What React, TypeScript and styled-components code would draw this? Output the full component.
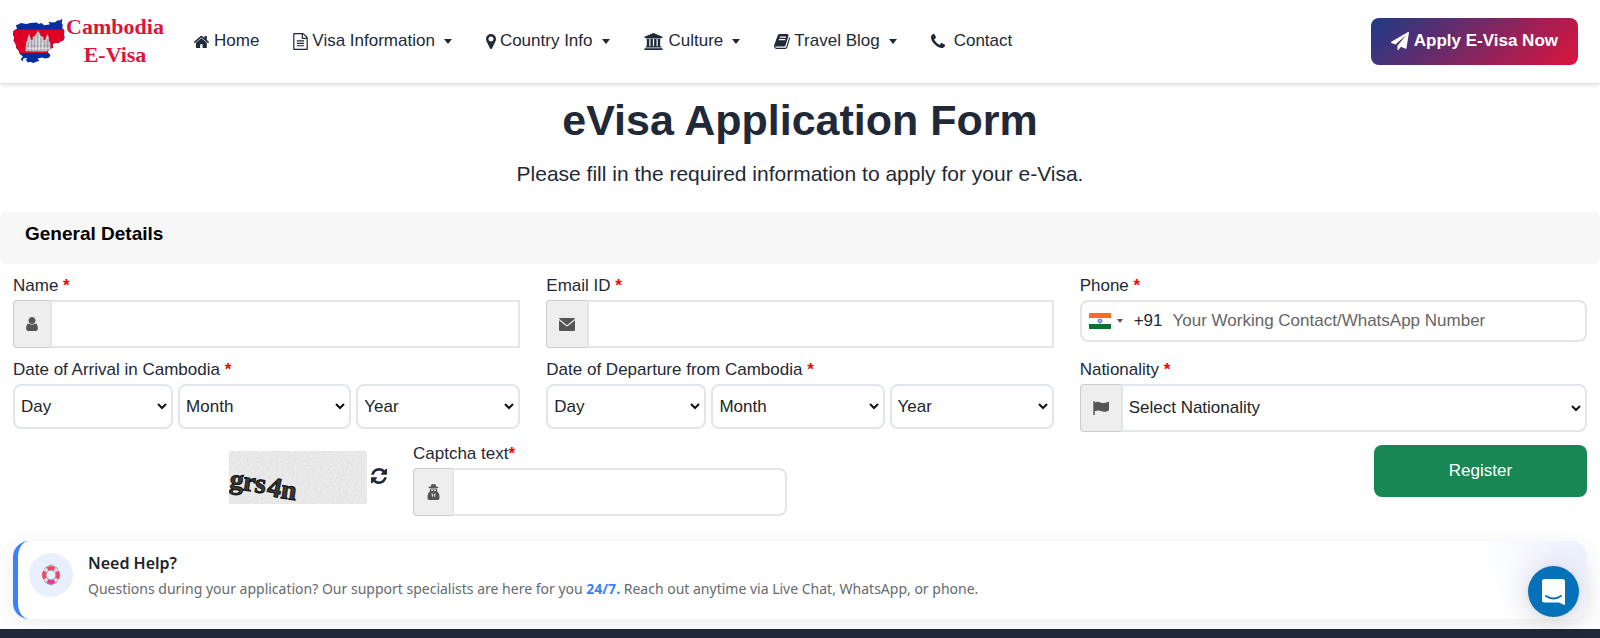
import React from "react";
import styled, { createGlobalStyle } from "styled-components";

const GlobalStyle = createGlobalStyle`
  *, *::before, *::after { box-sizing: border-box; }
  body {
    margin: 0;
    background: #fff;
    color: #1f2937;
    font-family: "Liberation Sans", Arial, Helvetica, sans-serif;
    font-size: 17px;
    line-height: 24px;
  }
  button, input, select { font: inherit; color: inherit; }
`;

const Page = styled.div`
  min-height: 100vh;
  display: flex;
  flex-direction: column;
`;

/* ---------- header ---------- */

const Header = styled.header`
  display: flex;
  align-items: center;
  height: 83px;
  padding: 0 22px 1px 13px;
  background: #fff;
  box-shadow: 0 1px 5px rgba(0, 0, 0, 0.2);
`;

const Brand = styled.a`
  display: flex;
  align-items: center;
  gap: 1px;
  color: #dc143c;
  text-decoration: none;
`;

const BrandName = styled.span`
  width: 98px;
  font-family: "Liberation Serif", "Times New Roman", serif;
  font-size: 22px;
  font-weight: 700;
  line-height: 28px;
  text-align: center;
`;

const Nav = styled.nav`
  display: flex;
  gap: 34px;
  margin-left: 30px;
`;

const NavLink = styled.a`
  display: flex;
  align-items: center;
  color: inherit;
  text-decoration: none;
  white-space: nowrap;
`;

const NavText = styled.span<{ $gap: number }>`
  margin-left: ${(p) => p.$gap}px;
`;

const Caret = styled.span<{ $small?: boolean }>`
  border: ${(p) => (p.$small ? 3 : 4)}px solid transparent;
  border-top-color: ${(p) => (p.$small ? "#555" : "currentColor")};
  border-top-width: ${(p) => (p.$small ? 4 : 5)}px;
  border-bottom: 0;
  margin-left: ${(p) => (p.$small ? 6 : 9)}px;
`;

const ApplyButton = styled.button`
  display: flex;
  align-items: center;
  gap: 5px;
  height: 47px;
  margin-left: auto;
  padding: 0 20px;
  border: 0;
  border-radius: 8px;
  background: linear-gradient(135deg, #1e3a8a, #dc143c);
  color: #fff;
  font-weight: 700;
  white-space: nowrap;
`;

/* ---------- headings ---------- */

const Title = styled.h1`
  margin: 12px 0 0;
  font-size: 43px;
  line-height: 50px;
  text-align: center;
`;

const Subtitle = styled.p`
  margin: 13px 0 22px;
  font-size: 21px;
  line-height: 32px;
  text-align: center;
`;

const SectionBar = styled.div`
  height: 52px;
  padding: 11px 25px;
  border-radius: 6px;
  background: #f7f7f7;
`;

const SectionTitle = styled.h2`
  margin: 0;
  color: #000;
  font-size: 19px;
  line-height: 22px;
`;

/* ---------- form ---------- */

const Form = styled.form`
  display: grid;
  gap: 10px;
  padding: 10px 13px 0;
`;

const Row = styled.div<{ $columns: string }>`
  display: grid;
  grid-template-columns: ${(p) => p.$columns};
  column-gap: 26px;
  align-items: start;
`;

const Field = styled.div`
  display: grid;
  gap: 2px;
  min-width: 0;
`;

const Label = styled.label`
  display: block;
`;

const Required = styled.span`
  color: #f00;
  font-weight: 700;
`;

const InputGroup = styled.div`
  display: flex;
  height: 48px;
`;

const Addon = styled.span<{ $width: number }>`
  display: flex;
  flex: none;
  align-items: center;
  justify-content: center;
  width: ${(p) => p.$width}px;
  border: 1px solid #ccc;
  border-right: 0;
  border-radius: 4px 0 0 4px;
  background: #eee;
  color: #555;
`;

const TextInput = styled.input<{ $rounded?: boolean }>`
  flex: 1;
  min-width: 0;
  padding: 0 12px;
  border: 2px solid #e2e6eb;
  border-radius: ${(p) => (p.$rounded ? "0 8px 8px 0" : "0")};
  background: #fff;
  outline: 0;
`;

const DateParts = styled.div`
  display: grid;
  grid-template-columns: 160fr 173fr 164fr;
  gap: 5px;
`;

const Select = styled.select<{ $joined?: boolean }>`
  flex: 1;
  min-width: 0;
  height: ${(p) => (p.$joined ? 48 : 45)}px;
  padding: 0 2px;
  border: 2px solid #e2e6eb;
  border-radius: ${(p) => (p.$joined ? "0 8px 8px 0" : "8px")};
  background: #fff url("data:image/svg+xml,%3Csvg xmlns='http://www.w3.org/2000/svg' width='10' height='7' viewBox='0 0 10 7'%3E%3Cpath d='M1 1l4 4 4-4' fill='none' stroke='%23111' stroke-width='2'/%3E%3C/svg%3E")
    no-repeat right 4px center;
  appearance: none;
  padding-left: 6px;
  color: #212529;
`;

const PhoneBox = styled.div`
  display: flex;
  align-items: center;
  height: 42px;
  padding: 0 7px;
  border: 2px solid #e2e6eb;
  border-radius: 8px;
`;

const DialCode = styled.button`
  display: flex;
  align-items: center;
  padding: 0;
  border: 0;
  background: none;
`;

const Code = styled.span`
  margin-left: 11px;
`;

const PhoneInput = styled.input`
  flex: 1;
  min-width: 0;
  margin-left: 10px;
  padding: 0;
  border: 0;
  outline: 0;
  background: none;
  &::placeholder { color: #666; opacity: 1; }
`;

const CaptchaSide = styled.div`
  display: flex;
  align-items: center;
  justify-content: flex-end;
  gap: 4px;
  margin-top: 9px;
`;

const IconButton = styled.button`
  display: flex;
  padding: 0 0 4px;
  border: 0;
  background: none;
`;

const RegisterButton = styled.button`
  width: 213px;
  height: 52px;
  margin-top: 3px;
  justify-self: end;
  border: 0;
  border-radius: 8px;
  background: #198754;
  color: #fff;
`;

/* ---------- help card, footer, chat ---------- */

const HelpCard = styled.section`
  display: flex;
  align-items: flex-start;
  gap: 15px;
  min-height: 78px;
  margin: 25px 13px 10px;
  padding: 12px 11px;
  border-left: 5px solid #3b82f6;
  border-radius: 16px;
  background: radial-gradient(circle at 100% 0, #ebf0ff 0, #fff 110px);
  box-shadow: 0 5px 24px rgba(0, 0, 0, 0.08);
  font-family: "Noto Sans", "Open Sans", sans-serif;
`;

const HelpIcon = styled.span`
  display: flex;
  flex: none;
  align-items: center;
  justify-content: center;
  width: 44px;
  height: 44px;
  border-radius: 50%;
  background: #e8f0fe;
`;

const HelpTitle = styled.h3`
  margin: -2px 0 0;
  color: #212529;
  font-size: 16px;
  font-weight: 600;
  line-height: 24px;
`;

const HelpText = styled.p`
  margin: 3px 0 0;
  color: #666a6e;
  font-size: 14px;
  line-height: 22px;
`;

const Highlight = styled.strong`
  color: #3b82f6;
`;

const Footer = styled.footer`
  flex: 1;
  min-height: 9px;
  background: #1f2937;
`;

const ChatButton = styled.button`
  position: fixed;
  right: 21px;
  bottom: 21px;
  display: flex;
  align-items: center;
  justify-content: center;
  width: 51px;
  height: 51px;
  padding: 0;
  border: 0;
  border-radius: 50%;
  background: #0571b8;
  box-shadow: 0 1px 6px rgba(0, 0, 0, 0.06), 0 2px 30px rgba(0, 0, 0, 0.16);
`;

/* ---------- icons ---------- */

const ICONS = {
  home: [64, 160, 1664, 1376, "M1408 992v480q0 26-19 45t-45 19h-384v-384h-256v384h-384q-26 0-45-19t-19-45v-480q0-1 .5-3t.5-3l575-474 575 474q1 2 1 6zm223-69l-62 74q-8 9-21 11h-3q-13 0-21-7l-692-577-692 577q-12 8-24 7-13-2-21-11l-62-74q-8-10-7-23.5t11-21.5l719-599q32-26 76-26t76 26l244 204v-195q0-14 9-23t23-9h192q14 0 23 9t9 23v408l219 182q10 8 11 21.5t-7 23.5z"],
  file: [128, 0, 1536, 1792, "M1596 380q28 28 48 76t20 88v1152q0 40-28 68t-68 28h-1344q-40 0-68-28t-28-68v-1600q0-40 28-68t68-28h896q40 0 88 20t76 48zm-444-244v376h376q-10-29-22-41l-313-313q-12-12-41-22zm384 1528v-1024h-416q-40 0-68-28t-28-68v-416h-768v1536h1280zm-1024-864q0-14 9-23t23-9h704q14 0 23 9t9 23v64q0 14-9 23t-23 9h-704q-14 0-23-9t-9-23v-64zm736 224q14 0 23 9t9 23v64q0 14-9 23t-23 9h-704q-14 0-23-9t-9-23v-64q0-14 9-23t23-9h704zm0 256q14 0 23 9t9 23v64q0 14-9 23t-23 9h-704q-14 0-23-9t-9-23v-64q0-14 9-23t23-9h704z"],
  marker: [384, 128, 1024, 1536, "M1152 640q0-106-75-181t-181-75-181 75-75 181 75 181 181 75 181-75 75-181zm256 0q0 109-33 179l-364 774q-16 33-47.5 52t-67.5 19-67.5-19-46.5-52l-365-774q-33-70-33-179 0-212 150-362t362-150 362 150 150 362z"],
  university: [0, 0, 1920, 1792, "M960 0l960 384v128h-128q0 26-20.5 45t-48.5 19h-1526q-28 0-48.5-19t-20.5-45h-128v-128zm-704 640h256v768h128v-768h256v768h128v-768h256v768h128v-768h256v768h59q28 0 48.5 19t20.5 45v64h-1664v-64q0-26 20.5-45t48.5-19h59v-768zm1595 960q28 0 48.5 19t20.5 45v128h-1920v-128q0-26 20.5-45t48.5-19h1782z"],
  book: [64, 128, 1664, 1536, "M1703 478q40 57 18 129l-275 906q-19 64-76.5 107.5t-122.5 43.5h-923q-77 0-148.5-53.5t-99.5-131.5q-24-67-2-127 0-4 3-27t4-37q1-8-3-21.5t-3-19.5q2-11 8-21t16.5-23.5 16.5-23.5q23-38 45-91.5t30-91.5q3-10 .5-30t-.5-28q3-11 17-28t17-23q21-36 42-92t25-90q1-9-2.5-32t.5-28q4-13 22-30.5t22-22.5q19-26 42.5-84.5t27.5-96.5q1-8-3-25.5t-2-26.5q2-8 9-18t18-23 17-21q8-12 16.5-30.5t15-35 16-36 19.5-32 26.5-23.5 36-11.5 47.5 5.5l-1 3q38-9 51-9h761q74 0 114 56t18 130l-274 906q-36 119-71.5 153.5t-128.5 34.5h-869q-27 0-38 15-11 16-1 43 24 70 144 70h923q29 0 56-15.5t35-41.5l300-987q7-22 5-57 38 15 59 43zm-1064 2q-4 13 2 22.5t20 9.5h608q13 0 25.5-9.5t16.5-22.5l21-64q4-13-2-22.5t-20-9.5h-608q-13 0-25.5 9.5t-16.5 22.5zm-83 256q-4 13 2 22.5t20 9.5h608q13 0 25.5-9.5t16.5-22.5l21-64q4-13-2-22.5t-20-9.5h-608q-13 0-25.5 9.5t-16.5 22.5z"],
  phone: [192, 128, 1408, 1408, "M1600 1240q0 27-10 70.5t-21 68.5q-21 50-122 106-94 51-186 51-27 0-53-3.5t-57.5-12.5-47-14.5-55.5-20.5-49-18q-98-35-175-83-127-79-264-216t-216-264q-48-77-83-175-3-9-18-49t-20.5-55.5-14.5-47-12.5-57.5-3.5-53q0-92 51-186 56-101 106-122 25-11 68.5-21t70.5-10q14 0 21 3 18 6 53 76 11 19 30 54t35 63.5 31 53.5q3 4 17.5 25t21.5 35.5 7 28.5q0 20-28.5 50t-62 55-62 53-28.5 46q0 9 5 22.5t8.5 20.5 14 24 11.5 19q76 137 174 235t235 174q2 1 19 11.5t24 14 20.5 8.5 22.5 5q18 0 46-28.5t53-62 55-62 50-28.5q14 0 28.5 7t35.5 21.5 25 17.5q25 15 53.5 31t63.5 35 54 30q70 35 76 53 3 7 3 21z"],
  plane: [0, 0, 1792, 1792, "M1764 11q33 24 27 64l-256 1536q-5 29-32 45-14 8-31 8-11 0-24-5l-453-185-242 295q-18 23-49 23-13 0-22-4-19-7-30.5-23.5t-11.5-36.5v-349l864-1059-1069 925-395-162q-37-14-40-55-2-40 32-59l1664-960q15-9 32-9 20 0 36 11z"],
  refresh: [128, 128, 1536, 1536, "M1639 1056q0 5-1 7-64 268-268 434.5t-478 166.5q-146 0-282.5-55t-243.5-157l-129 129q-19 19-45 19t-45-19-19-45v-448q0-26 19-45t45-19h448q26 0 45 19t19 45-19 45l-137 137q71 66 161 102t187 36q134 0 250-65t186-179q11-17 53-117 8-23 30-23h192q13 0 22.5 9.5t9.5 22.5zm25-800v448q0 26-19 45t-45 19h-448q-26 0-45-19t-19-45 19-45l138-138q-148-137-349-137-134 0-250 65t-186 179q-11 17-53 117-8 23-30 23h-199q-13 0-22.5-9.5t-9.5-22.5v-7q65-268 270-434.5t480-166.5q146 0 284 55.5t245 156.5l130-129q19-19 45-19t45 19 19 45z"],
  user: [256, 128, 1280, 1536, "M1536 1399q0 109-62.5 187t-150.5 78h-854q-88 0-150.5-78t-62.5-187q0-85 8.5-160.5t31.5-152 58.5-131 94-89 134.5-34.5q131 128 313 128t313-128q76 0 134.5 34.5t94 89 58.5 131 31.5 152 8.5 160.5zm-256-887q0 159-112.5 271.5t-271.5 112.500-271.500-112.500-112.500-271.500 112.500-271.500 271.500-112.500 271.500 112.500 112.500 271.500z"],
  envelope: [0, 0, 16, 13, "M1 0h14q1 0 1 .8L8.600 6.700q-.6.500-1.200 0L0 .8Q0 0 1 0zM0 2.300l6.700 5.400q1.300 1 2.600 0L16 2.300V12q0 1-1 1H1q-1 0-1-1z"],
  flag: [0, 0, 16, 14, "M.3.600Q.3 0 1 0t.8.600V1.600C3.500.6 5.500.6 7.500 1.500S12.500 2.300 16 .6v8.600c-3 2-5.500 1.900-8 .9s-4-.9-6.200.1V14H.3z"],
  agent: [0, 0, 12, 16, "M3.300 2.600C3.500 1 4 0 4.800 0q.6 0 1.200.4Q6.600 0 7.200 0c.8 0 1.300 1 1.500 2.600 1.300.2 2.300.5 2.300.9S9.500 4.600 6 4.600 1 4 1 3.500s1-.7 2.300-.9zM2.400 5.100q3.600.6 7.200 0l.2 2.700q2.200 1.200 2.200 6 0 2.200-1.700 2.200H1.700Q0 16 0 13.800 0 9 2.200 7.800zM4 9l.7 4.500.9-1.900L5.200 9.700zm4 0l-1.200.7-.4 1.900.9 1.900zM3.500 5.800l.4 1.100h1.300l.5-.8zm5 0l-2.200.3.5.8h1.300z"],
} as const;

type IconName = keyof typeof ICONS;

function Icon({ name, width, height }: { name: IconName; width: number; height: number }) {
  const [x, y, w, h, d] = ICONS[name];
  return (
    <svg width={width} height={height} viewBox={`${x} ${y} ${w} ${h}`} fill="currentColor" fillRule={name === "agent" ? "evenodd" : undefined} aria-hidden="true">
      <path d={d} />
    </svg>
  );
}

function CambodiaMap() {
  return (
    <svg width="52" height="46" viewBox="38 56 158 138" aria-hidden="true">
      <defs>
        <clipPath id="country">
          <path d="M38 98L42 92 50 88 47 77 55 74 62 70 78 73 92 70 110 69 116 73 124 70 133 77 143 76 150 74 146 66 156 69 166 68 174 62 180 63 188 57 186 70 189 76 188 86 194 92 193 105 195 114 190 124 180 127 176 132 166 130 158 136 160 146 150 148 143 158 152 168 147 176 136 178 126 175 113 178 118 186 108 188 100 192 90 188 84 190 78 184 80 176 70 178 66 188 62 180 68 172 58 164 55 154 48 146 46 134 40 124 42 112 37 106Z" />
        </clipPath>
      </defs>
      <g clipPath="url(#country)">
        <rect x="30" y="50" width="170" height="145" fill="#032ea1" />
        <rect x="30" y="90" width="170" height="72" fill="#e00025" />
      </g>
      <path fill="#c9c9cd" stroke="#8d8489" strokeWidth="1" d="M76 156L78 128 82 124 82 116 87 104 91 116 93 122 98 121 98 112 105 110 108 104 114 94 120 104 122 110 130 112 131 122 136 122 139 112 143 104 147 116 147 125 151 130 152 150 138 157Z" />
      <path stroke="#8a8a90" strokeWidth="2" d="M85 128v27M94 124v32M104 116v40M113 104v52M123 116v40M133 126v30M143 120v32M78 140h72" fill="none" />
      <path stroke="#f4f4f6" strokeWidth="2" d="M81 147h68M89 134v18M108 118v34M118 110v42M128 128v22" fill="none" />
    </svg>
  );
}

function IndiaFlag() {
  return (
    <svg width="22" height="16" viewBox="0 0 22 16" aria-hidden="true">
      <rect width="22" height="16" fill="#fff" />
      <rect width="22" height="5" fill="#ff6a2b" />
      <rect y="11" width="22" height="5" fill="#0a7034" />
      <circle cx="11" cy="8" r="2" fill="#aab0dd" stroke="#6870b8" strokeWidth="1" />
    </svg>
  );
}

function LifeRing() {
  return (
    <svg width="20" height="22" viewBox="0 0 20 22" fill="none" aria-hidden="true">
      <path d="M10 1l6 3 3 7-3 7-6 3-6-3-3-7 3-7z" stroke="#8d8a9c" strokeWidth="1" />
      <circle cx="10" cy="11" r="7" stroke="#dcd9e6" strokeWidth="4" />
      <path d="M6.5 4.900Q10 3.400 13.5 4.900M16 7.500Q17.600 11 16 14.500M4 7.500Q2.400 11 4 14.500" stroke="#f8405f" strokeWidth="4" />
      <path d="M6.5 17.200Q10 18.600 13.5 17.200" stroke="#f5309a" strokeWidth="4" />
      <circle cx="10" cy="11" r="5" stroke="#a09aae" strokeWidth="1" />
    </svg>
  );
}

function CaptchaImage() {
  return (
    <svg width="138" height="53" viewBox="0 0 138 53" role="img" aria-label="Captcha">
      <defs>
        <filter id="grain" x="0" y="0" width="100%" height="100%">
          <feTurbulence type="fractalNoise" baseFrequency="0.5" numOctaves="2" seed="4" />
          <feColorMatrix values="0.25 0 0 0 0.74  0.25 0 0 0 0.74  0.25 0 0 0 0.74  0 0 0 0 1" />
        </filter>
      </defs>
      <rect width="138" height="53" fill="#d8d8d8" />
      <rect width="138" height="53" filter="url(#grain)" opacity="0.7" />
      <g fontFamily="Liberation Serif, serif" fontWeight="700" fontSize="28" stroke="#111" strokeWidth="1">
        <text x="0 13 25 37 51" y="37 39 41 44 47" rotate="6 8 8 12 8" fill="#3a3a3a">grs4n</text>
      </g>
    </svg>
  );
}

function ChatGlyph() {
  return (
    <svg width="23" height="26" viewBox="0 0 23 26" aria-hidden="true">
      <path d="M2.500 0h18q2.500 0 2.500 2.500V26q-3-1-6-2.500H2.500Q0 23.500 0 21V2.500Q0 0 2.500 0z" fill="#fff" />
      <path d="M4 17q7.500 5 15 0" fill="none" stroke="#0571b8" strokeWidth="2" strokeLinecap="round" />
    </svg>
  );
}

/* ---------- page ---------- */

const NAV: { text: string; icon: IconName; w: number; h: number; gap: number; menu?: boolean }[] = [
  { text: "Home", icon: "home", w: 16, h: 13, gap: 4 },
  { text: "Visa Information", icon: "file", w: 15, h: 17, gap: 4, menu: true },
  { text: "Country Info", icon: "marker", w: 10, h: 15, gap: 4, menu: true },
  { text: "Culture", icon: "university", w: 19, h: 17, gap: 6, menu: true },
  { text: "Travel Blog", icon: "book", w: 16, h: 15, gap: 4, menu: true },
  { text: "Contact", icon: "phone", w: 14, h: 14, gap: 9 },
];

function DateField({ id, label }: { id: string; label: string }) {
  return (
    <Field>
      <Label htmlFor={`${id}-day`}>
        {label} <Required>*</Required>
      </Label>
      <DateParts>
        {["Day", "Month", "Year"].map((part) => (
          <Select key={part} id={`${id}-${part.toLowerCase()}`} aria-label={`${label} ${part}`}>
            <option>{part}</option>
          </Select>
        ))}
      </DateParts>
    </Field>
  );
}

export default function App() {
  return (
    <Page>
      <GlobalStyle />
      <Header>
        <Brand href="#">
          <CambodiaMap />
          <BrandName>Cambodia E-Visa</BrandName>
        </Brand>
        <Nav>
          {NAV.map((item) => (
            <NavLink href="#" key={item.text}>
              <Icon name={item.icon} width={item.w} height={item.h} />
              <NavText $gap={item.gap}>{item.text}</NavText>
              {item.menu && <Caret />}
            </NavLink>
          ))}
        </Nav>
        <ApplyButton type="button">
          <Icon name="plane" width={18} height={18} />
          Apply E-Visa Now
        </ApplyButton>
      </Header>

      <main>
        <Title>eVisa Application Form</Title>
        <Subtitle>Please fill in the required information to apply for your e-Visa.</Subtitle>
        <SectionBar>
          <SectionTitle>General Details</SectionTitle>
        </SectionBar>

        <Form onSubmit={(e) => e.preventDefault()}>
          <Row $columns="repeat(3, 1fr)">
            <Field>
              <Label htmlFor="name">
                Name <Required>*</Required>
              </Label>
              <InputGroup>
                <Addon $width={37}>
                  <Icon name="user" width={12} height={14} />
                </Addon>
                <TextInput id="name" type="text" />
              </InputGroup>
            </Field>
            <Field>
              <Label htmlFor="email">
                Email ID <Required>*</Required>
              </Label>
              <InputGroup>
                <Addon $width={41}>
                  <Icon name="envelope" width={16} height={13} />
                </Addon>
                <TextInput id="email" type="email" />
              </InputGroup>
            </Field>
            <Field>
              <Label htmlFor="phone">
                Phone <Required>*</Required>
              </Label>
              <PhoneBox>
                <DialCode type="button" aria-label="Country code">
                  <IndiaFlag />
                  <Caret $small />
                  <Code>+91</Code>
                </DialCode>
                <PhoneInput id="phone" type="tel" placeholder="Your Working Contact/WhatsApp Number" />
              </PhoneBox>
            </Field>
          </Row>

          <Row $columns="repeat(3, 1fr)">
            <DateField id="arrival" label="Date of Arrival in Cambodia" />
            <DateField id="departure" label="Date of Departure from Cambodia" />
            <Field>
              <Label htmlFor="nationality">
                Nationality <Required>*</Required>
              </Label>
              <InputGroup>
                <Addon $width={41}>
                  <Icon name="flag" width={16} height={14} />
                </Addon>
                <Select id="nationality" $joined>
                  <option>Select Nationality</option>
                </Select>
              </InputGroup>
            </Field>
          </Row>

          <Row $columns="minmax(0, 1fr) minmax(0, 1fr) calc(50% - 13px)">
            <CaptchaSide>
              <CaptchaImage />
              <IconButton type="button" aria-label="Refresh captcha">
                <Icon name="refresh" width={16} height={16} />
              </IconButton>
            </CaptchaSide>
            <Field>
              <Label htmlFor="captcha">
                Captcha text<Required>*</Required>
              </Label>
              <InputGroup>
                <Addon $width={39}>
                  <Icon name="agent" width={13} height={16} />
                </Addon>
                <TextInput id="captcha" type="text" $rounded />
              </InputGroup>
            </Field>
            <RegisterButton type="submit">Register</RegisterButton>
          </Row>
        </Form>

        <HelpCard>
          <HelpIcon>
            <LifeRing />
          </HelpIcon>
          <div>
            <HelpTitle>Need Help?</HelpTitle>
            <HelpText>
              Questions during your application? Our support specialists are here for you{" "}
              <Highlight>24/7.</Highlight> Reach out anytime via Live Chat, WhatsApp, or phone.
            </HelpText>
          </div>
        </HelpCard>
      </main>

      <Footer />
      <ChatButton type="button" aria-label="Open chat">
        <ChatGlyph />
      </ChatButton>
    </Page>
  );
}
